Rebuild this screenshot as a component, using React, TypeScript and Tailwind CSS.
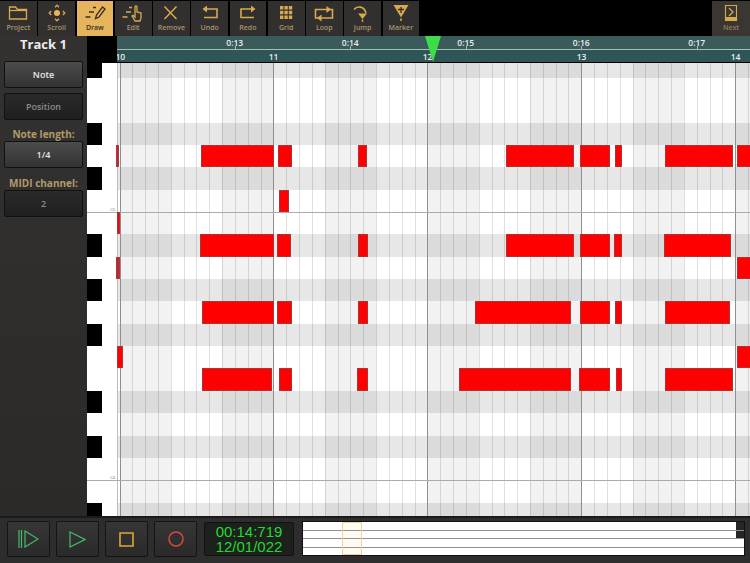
import * as React from "react"

const ROW = "h-[22.35px]"

// y order, top to bottom. first row is cut by the ruler
const rows: { black: boolean; notes?: [number, number, boolean?][]; line?: string; h?: string }[] = [
  { black: true, h: "h-[15px]" },
  { black: false },
  { black: false },
  { black: true },
  {
    black: false,
    notes: [[116, 119, true], [201, 274], [278, 292], [358, 367], [506, 574], [580, 610], [615, 622], [665, 733], [737, 751]],
  },
  { black: true },
  { black: false, notes: [[279, 289]] },
  { black: false, line: "C5", notes: [[117, 120]] },
  {
    black: true,
    notes: [[200, 274], [277, 291], [358, 368], [506, 574], [580, 610], [614, 622], [664, 731]],
  },
  { black: false, notes: [[116, 120, true], [737, 751]] },
  { black: true },
  {
    black: false,
    notes: [[202, 274], [277, 292], [358, 368], [475, 571], [580, 610], [615, 622], [665, 730]],
  },
  { black: true },
  { black: false, notes: [[117, 123], [737, 751]] },
  {
    black: false,
    notes: [[202, 272], [279, 292], [357, 368], [459, 571], [579, 610], [616, 622], [665, 733]],
  },
  { black: true },
  { black: false },
  { black: true },
  { black: false },
  { black: false, line: "C4" },
  { black: true },
]

const bands = Array.from({ length: 13 }, (_, i) => i)

function Icon({ children }: { children: React.ReactNode }) {
  return (
    <svg viewBox="0 0 24 18" className="h-[18px] w-[24px]" fill="none" stroke="#d9a94f" strokeWidth="1.3">
      {children}
    </svg>
  )
}

const tools: { label: string; icon: React.ReactNode; active?: boolean }[] = [
  {
    label: "Project",
    icon: (
      <Icon>
        <path d="M3.500 15V3h6l2 2.500h9V15z" />
        <path d="M3.500 6.500h17" />
      </Icon>
    ),
  },
  {
    label: "Scroll",
    icon: (
      <Icon>
        <circle cx="12" cy="9" r="3" fill="#e9b655" stroke="none" />
        <path d="M10 3.200 12 1.200l2 2M10 14.800l2 2 2-2M6.200 7l-2 2 2 2M17.800 7l2 2-2 2" />
      </Icon>
    ),
  },
  {
    label: "Draw",
    active: true,
    icon: (
      <svg viewBox="0 0 24 18" className="h-[18px] w-[24px]" fill="none" stroke="#3a2f1c" strokeWidth="1.3">
        <path d="M10 3.500h3M6 8h5M2.500 13h5" />
        <path d="M12.500 14.500l1-3.500 6-8 2.500 2-6 8z" />
      </svg>
    ),
  },
  {
    label: "Edit",
    icon: (
      <Icon>
        <path d="M8 3.500h3M5 8h5M1.500 13h5" />
        <path d="M14 17l-3-5 1-.7 2 2V3a1 1 0 0 1 2 0v5l4 1v5l-1 3z" />
      </Icon>
    ),
  },
  {
    label: "Remove",
    icon: (
      <Icon>
        <path d="M5.500 2.500l12 12.500M17.500 2.500 5.500 15" strokeWidth="1.5" />
      </Icon>
    ),
  },
  {
    label: "Undo",
    icon: (
      <Icon>
        <path d="M9 5h10v8.500H6" strokeWidth="1.6" />
        <path d="M9 1.500 4.500 5 9 8.500z" fill="#d9a94f" stroke="none" />
      </Icon>
    ),
  },
  {
    label: "Redo",
    icon: (
      <Icon>
        <path d="M15 5H5v8.500h13" strokeWidth="1.6" />
        <path d="M15 1.500 19.500 5 15 8.500z" fill="#d9a94f" stroke="none" />
      </Icon>
    ),
  },
  {
    label: "Grid",
    icon: (
      <Icon>
        <path
          d="M6 2h3.400v3.400H6zM10.400 2h3.400v3.400h-3.400zM14.800 2h3.400v3.400h-3.400zM6 6.800h3.400v3.400H6zM10.400 6.800h3.400v3.400h-3.400zM14.800 6.800h3.400v3.400h-3.400zM6 11.600h3.400V15H6zM10.400 11.600h3.400V15h-3.400zM14.800 11.600h3.400V15h-3.400z"
          fill="#d9a94f"
          stroke="none"
        />
      </Icon>
    ),
  },
  {
    label: "Loop",
    icon: (
      <Icon>
        <path d="M8 14H3.500V5.500H15M16 5.500h4.500V14H9" strokeWidth="1.6" />
        <path d="M14.500 2 19 5.500 14.500 9zM9.500 10.500 5 14l4.500 3.500z" fill="#d9a94f" stroke="none" />
      </Icon>
    ),
  },
  {
    label: "Jump",
    icon: (
      <Icon>
        <path d="M3 5.500C6 2 13 1.500 15 9" strokeWidth="1.6" />
        <path d="M7 9.500h9L11.500 15zM10.800 15.500h1.400V18h-1.400z" fill="#d9a94f" stroke="none" />
      </Icon>
    ),
  },
  {
    label: "Marker",
    icon: (
      <svg viewBox="0 0 24 18" className="h-[18px] w-[24px]">
        <path d="M4.500 1h15L12 13.500z" fill="#d9a94f" />
        <path d="M12 3v6M9 5.500h6" stroke="#2e2b28" strokeWidth="1.3" />
        <path d="M11.200 14.500h1.600V17h-1.600z" fill="#d9a94f" />
      </svg>
    ),
  },
]

function ToolButton({ label, icon, active }: { label: string; icon: React.ReactNode; active?: boolean }) {
  return (
    <div
      className={
        active
          ? "flex h-[35px] w-[36.75px] flex-col items-center bg-[#e6b45d] pt-[3px] text-[#3a2f1c]"
          : "flex h-[35px] w-[36.75px] flex-col items-center bg-[#32302e] pt-[3px] text-[#a8946f]"
      }
    >
      {icon}
      <span className="mt-[1px] text-[7px] leading-[10px] font-semibold">{label}</span>
    </div>
  )
}

function SideButton({ label, dark }: { label: string; dark?: boolean }) {
  return (
    <div
      className={
        dark
          ? "flex h-[27px] items-center justify-center rounded-[2px] border border-[#111] bg-gradient-to-b from-[#2b2a2a] to-[#1f1f1f] text-[9px] font-semibold text-[#8b8b8b]"
          : "flex h-[27px] items-center justify-center rounded-[2px] border border-[#111] bg-gradient-to-b from-[#4d4c4c] to-[#343333] text-[9px] font-semibold text-[#e6e6e6]"
      }
    >
      {label}
    </div>
  )
}

function TransportButton({ children }: { children: React.ReactNode }) {
  return (
    <div className="flex h-[36px] w-[43px] items-center justify-center rounded-[2px] border border-[#141414] bg-gradient-to-b from-[#363636] to-[#2a2a2a]">
      {children}
    </div>
  )
}

export default function App() {
  return (
    <div className="flex h-[563px] w-[750px] flex-col overflow-hidden bg-black font-['Open_Sans',sans-serif]">
      {/* --- TOOLBAR --- */}
      <div className="flex h-[36px] shrink-0 items-start justify-between pt-[1px]">
        <div className="flex gap-[1.5px]">
          {tools.map((t) => (
            <ToolButton key={t.label} {...t} />
          ))}
        </div>
        <div className="w-[38px]">
          <div className="flex h-[35px] flex-col items-center bg-[#3a3631] pt-[3px] text-[#8f7f62]">
            <svg viewBox="0 0 24 18" className="h-[18px] w-[24px]" fill="none" stroke="#d9a94f" strokeWidth="1.1">
              <path d="M6.500 1.500h11v15h-11z" />
              <path d="M10 4l4 4-4 4" strokeWidth="1.3" />
              <path d="M6.500 13.500h11v3h-11z" fill="#d9a94f" />
            </svg>
            <span className="mt-[1px] text-[7px] leading-[10px] font-semibold">Next</span>
          </div>
        </div>
      </div>

      <div className="flex min-h-0 flex-1">
        {/* --- SIDEBAR --- */}
        <div className="flex w-[87px] shrink-0 flex-col bg-gradient-to-b from-[#343230] to-[#2b2a29] px-[4px]">
          <div className="flex h-[25px] items-center justify-center pb-[7px] text-[13px] font-bold text-[#ececec]">
            Track 1
          </div>
          <SideButton label="Note" />
          <div className="mt-[5px]">
            <SideButton label="Position" dark />
          </div>
          <div className="mt-[7px] flex h-[14px] items-center justify-center text-[10px] font-bold whitespace-nowrap text-[#b09a6b]">
            Note length:
          </div>
          <SideButton label="1/4" />
          <div className="mt-[9px] flex h-[13px] items-center justify-center text-[10px] font-bold whitespace-nowrap text-[#b09a6b]">
            MIDI channel:
          </div>
          <SideButton label="2" dark />
        </div>

        <div className="flex min-w-0 flex-1 flex-col">
          {/* --- RULER --- */}
          <div className="flex h-[27px] shrink-0 pb-[1px]">
            <div className="w-[30px] shrink-0 bg-black" />
            <div className="relative flex-1 overflow-hidden">
              <div className="flex h-[13.5px] border-b border-[#a9bcbc] bg-[#3b5b5b] text-[8.5px] leading-[13px] font-semibold text-[#e8eeee]">
                <div className="w-[60px] shrink-0" />
                {["0:13", "0:14", "0:15", "0:16", "0:17"].map((t) => (
                  <div key={t} className="relative w-[115.5px] shrink-0 text-center">
                    {t}
                    <div className="absolute bottom-0 left-1/2 h-[3px] w-[1px] bg-[#a9bcbc]" />
                  </div>
                ))}
              </div>
              <div className="flex h-[12.5px] bg-[#2f5656] text-[8.5px] leading-[13px] font-semibold text-[#e8eeee]">
                <div className="w-[79.5px] shrink-0 -translate-x-[1.5px]">10</div>
                {["11", "12", "13", "14"].map((t) => (
                  <div key={t} className="w-[154px] shrink-0 text-center">
                    {t}
                  </div>
                ))}
              </div>
              {/* playhead */}
              <svg viewBox="0 0 16 26" className="absolute top-0 left-[308px] h-[26px] w-[16px]">
                <path d="M0 0h16L8 26z" fill="#3fdc4a" />
              </svg>
            </div>
          </div>

          {/* --- PIANO ROLL --- */}
          <div className="relative min-h-0 flex-1 overflow-hidden bg-white">
            <div className="absolute inset-y-0 right-0 left-[30px] z-[1] flex">
              <div className="w-[2.5px] shrink-0 border-l border-[#bdbdbd]" />
              {bands.map((b) => (
                <div key={b} className={b % 2 === 0 ? "flex shrink-0 bg-black/[0.05]" : "flex shrink-0"}>
                  {[0, 1, 2, 3].map((c) => (
                    <div
                      key={c}
                      className={
                        c === 0 && b % 3 === 0
                          ? "h-full w-[12.833px] border-l border-[#8f8f8f]"
                          : "h-full w-[12.833px] border-l border-black/[0.12]"
                      }
                    />
                  ))}
                </div>
              ))}
            </div>

            {rows.map((r, i) => (
              <div key={i} className={(r.h ?? ROW) + " relative flex"}>
                <div className="relative w-[30px] shrink-0 bg-white">
                  {r.black && <div className="h-full w-[15px] bg-black" />}
                  {r.line && (
                    <span className="absolute -top-[4px] right-[2px] font-['Liberation_Sans',sans-serif] text-[4px] leading-[4px] text-[#777]">
                      {r.line}
                    </span>
                  )}
                </div>
                <div className={r.black ? "flex-1 bg-[#e7e7e7]" : "flex-1 bg-white"} />
                {r.line && <div className="absolute inset-x-0 top-0 z-[2] h-[1px] bg-[#ababab]" />}
                {r.notes?.map(([from, to, dim]) => (
                  <div
                    key={from}
                    className={
                      dim
                        ? "absolute inset-y-0 z-10 border border-[#a83a3f] bg-[#c2262c]"
                        : "absolute inset-y-0 z-10 border border-[#ad3337] bg-[#ff0000]"
                    }
                    style={{ left: from - 87, width: to - from }}
                  />
                ))}
              </div>
            ))}
          </div>
        </div>
      </div>

      {/* --- TRANSPORT --- */}
      <div className="flex h-[47px] shrink-0 items-start gap-[6px] border-t-2 border-[#1a1a1a] bg-[#2d2d2d] pt-[3px] pl-[7px]">
        <TransportButton>
          <svg viewBox="0 0 21 18" className="h-[18px] w-[21px]" fill="none" stroke="#46bb6b" strokeWidth="1.2">
            <path d="M1 0v18M3.500 0v18M7 1l13 8-13 8z" />
          </svg>
        </TransportButton>
        <TransportButton>
          <svg viewBox="0 0 17 17" className="h-[17px] w-[17px]" fill="none" stroke="#46bb6b" strokeWidth="1.2">
            <path d="M1 1l15 7.500L1 16z" />
          </svg>
        </TransportButton>
        <TransportButton>
          <svg viewBox="0 0 15 15" className="h-[15px] w-[15px]" fill="none" stroke="#e0a53a" strokeWidth="1.6">
            <path d="M1 1h13v13H1z" />
          </svg>
        </TransportButton>
        <TransportButton>
          <svg viewBox="0 0 16 16" className="h-[16px] w-[16px]" fill="none" stroke="#d9483b" strokeWidth="1.5">
            <circle cx="8" cy="8" r="7" />
          </svg>
        </TransportButton>
        <div className="mt-[1px] ml-[1px] flex h-[34px] w-[90px] flex-col items-center justify-center rounded-[2px] border border-[#111] bg-[#1c211b] font-['Liberation_Sans',sans-serif] text-[15px] leading-[15px] text-[#22d933]">
          <div>00:14:719</div>
          <div>12/01/022</div>
        </div>
        <div className="relative ml-[2px] flex h-[35px] w-[443px] flex-col gap-[1px] border border-[#111] bg-[#8e8e8e]">
          <div className="flex h-[8px]"><div className="flex-1 bg-white" /><div className="w-[8px] bg-[#262626]" /></div>
          <div className="flex h-[7.5px]"><div className="flex-1 bg-white" /><div className="w-[8px] bg-[#262626]" /></div>
          <div className="h-[7.5px] bg-white" />
          <div className="h-[7.5px] bg-white" />
          <div className="absolute inset-y-0 left-[39px] w-[20px] border border-[#f0d29a] bg-[#f5d7a0]/10" />
        </div>
      </div>
    </div>
  )
}
